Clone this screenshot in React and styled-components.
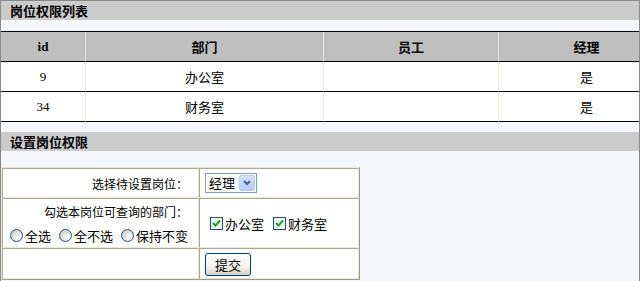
import React from "react";
import styled, { createGlobalStyle } from "styled-components";

const GlobalStyle = createGlobalStyle`
  html, body {
    margin: 0;
    padding: 0;
    background: #f5f7fa;
  }
  body {
    font-family: "Noto Sans CJK SC", "Liberation Sans", sans-serif;
    font-size: 12px;
    color: #000;
  }
`;

const Page = styled.div`
  width: 640px;
  height: 281px;
  box-sizing: border-box;
  border: 1px solid #8a8a8a;
  border-bottom: none;
  background: #f5f7fa;
  overflow: hidden;
`;

const SectionTitle = styled.div`
  height: 19px;
  line-height: 19px;
  padding-left: 9px;
  background: #cccccc;
  font-size: 13px;
  font-weight: bold;
  margin-top: ${(p) => p.$top || 0}px;
`;

const ListTable = styled.table`
  width: 673px;
  margin-top: 11px;
  border-spacing: 0;
  border-collapse: separate;
  table-layout: fixed;
  border-top: 1px solid #000;
`;

const HeadCell = styled.th`
  height: 29px;
  padding: 0;
  background: #bfbfbf;
  border-bottom: 1px solid #000;
  border-left: ${(p) => (p.$first ? "none" : "1px solid #ece9d8")};
  font-size: 13px;
  font-weight: bold;
  text-align: center;
  font-family: ${(p) =>
    p.$latin ? '"Liberation Serif", serif' : '"Noto Sans CJK SC", sans-serif'};
`;

const Cell = styled.td`
  height: 29px;
  padding: 0;
  background: #fff;
  border-bottom: 1px solid #000;
  border-left: ${(p) => (p.$first ? "none" : "1px solid #ece9d8")};
  font-size: 13px;
  text-align: center;
  font-family: ${(p) =>
    p.$latin ? '"Liberation Serif", serif' : '"Noto Sans CJK SC", sans-serif'};
`;

const FormTable = styled.table`
  width: 359px;
  margin-top: 16px;
  border-spacing: 0;
  border-collapse: separate;
  table-layout: fixed;
  border: 1px solid;
  border-color: #ece9d8 #9d9a8c #9d9a8c #ece9d8;
  background: #fff;
`;

const FormCell = styled.td`
  height: ${(p) => p.$h}px;
  border: 1px solid;
  border-color: #aca899 #ece9d8 #ece9d8 #aca899;
  vertical-align: middle;
  font-size: 12px;
`;

const LabelCell = styled(FormCell)`
  padding: 0 10px 0 0;
  text-align: right;
`;

const ValueCell = styled(FormCell)`
  padding: 0 0 0 5px;
  text-align: left;
`;

const Line = styled.div`
  display: flex;
  align-items: center;
  height: 24px;
  justify-content: ${(p) => p.$justify || "flex-end"};
  gap: ${(p) => p.$gap || 0}px;
  padding-left: ${(p) => p.$indent || 0}px;
`;

const Option = styled.label`
  display: inline-flex;
  align-items: center;
  gap: 2px;
  font-size: 13px;
`;

const Radio = styled.span`
  width: 13px;
  height: 13px;
  box-sizing: border-box;
  border-radius: 50%;
  border: 1px solid #1c5180;
  background: radial-gradient(circle at 70% 70%, #ffffff 0%, #dcdcd5 60%, #c6c5ba 100%);
  display: inline-block;
`;

const Check = styled.span`
  width: 13px;
  height: 13px;
  box-sizing: border-box;
  border: 1px solid #1c5180;
  background: #f4f4f0;
  display: inline-flex;
  align-items: center;
  justify-content: center;
`;

const SelectBox = styled.div`
  display: inline-flex;
  align-items: center;
  height: 20px;
  box-sizing: border-box;
  border: 1px solid #7f9db9;
  background: #fff;
  padding: 1px;
`;

const SelectText = styled.span`
  padding: 0 4px 0 2px;
  font-size: 13px;
  line-height: 16px;
`;

const SelectArrow = styled.span`
  width: 16px;
  height: 16px;
  box-sizing: border-box;
  border: 1px solid #b9c9ef;
  border-radius: 2px;
  background: linear-gradient(#d6e2fc, #b6c9f7);
  display: inline-flex;
  align-items: center;
  justify-content: center;
`;

const SubmitButton = styled.button`
  width: 46px;
  height: 23px;
  margin-top: 2px;
  padding: 0;
  border: 1px solid #003c74;
  border-radius: 3px;
  background: linear-gradient(#ffffff, #f4f3ee 60%, #d6d0c5);
  font-family: "Noto Sans CJK SC", sans-serif;
  font-size: 13px;
  color: #000;
`;

const rows = [
  { id: 9, dept: "办公室", staff: "", manager: "是" },
  { id: 34, dept: "财务室", staff: "", manager: "是" },
];

const CheckMark = () => (
  <svg width="9" height="9" viewBox="0 0 9 9">
    <path d="M1 4 L3.5 6.5 L8 1.5" fill="none" stroke="#21a121" strokeWidth="2" />
  </svg>
);

const Chevron = () => (
  <svg width="8" height="6" viewBox="0 0 8 6">
    <path d="M1 1 L4 4 L7 1" fill="none" stroke="#4d6185" strokeWidth="2" />
  </svg>
);

export default function App() {
  return (
    <>
      <GlobalStyle />
      <Page>
        <SectionTitle>岗位权限列表</SectionTitle>
        <ListTable>
          <colgroup>
            <col style={{ width: 84 }} />
            <col style={{ width: 238 }} />
            <col style={{ width: 175 }} />
            <col style={{ width: 176 }} />
          </colgroup>
          <thead>
            <tr>
              <HeadCell $first $latin>id</HeadCell>
              <HeadCell>部门</HeadCell>
              <HeadCell>员工</HeadCell>
              <HeadCell>经理</HeadCell>
            </tr>
          </thead>
          <tbody>
            {rows.map((r) => (
              <tr key={r.id}>
                <Cell $first $latin>{r.id}</Cell>
                <Cell>{r.dept}</Cell>
                <Cell>{r.staff}</Cell>
                <Cell>{r.manager}</Cell>
              </tr>
            ))}
          </tbody>
        </ListTable>

        <SectionTitle $top={10}>设置岗位权限</SectionTitle>
        <FormTable>
          <colgroup>
            <col style={{ width: 197 }} />
            <col />
          </colgroup>
          <tbody>
            <tr>
              <LabelCell $h={28}>选择待设置岗位：</LabelCell>
              <ValueCell $h={28}>
                <SelectBox>
                  <SelectText>经理</SelectText>
                  <SelectArrow>
                    <Chevron />
                  </SelectArrow>
                </SelectBox>
              </ValueCell>
            </tr>
            <tr>
              <LabelCell $h={48}>
                <Line>勾选本岗位可查询的部门：</Line>
                <Line $gap={8}>
                  <Option><Radio />全选</Option>
                  <Option><Radio />全不选</Option>
                  <Option><Radio />保持不变</Option>
                </Line>
              </LabelCell>
              <ValueCell $h={48}>
                <Line $justify="flex-start" $gap={9} $indent={5}>
                  <Option><Check><CheckMark /></Check>办公室</Option>
                  <Option><Check><CheckMark /></Check>财务室</Option>
                </Line>
              </ValueCell>
            </tr>
            <tr>
              <LabelCell $h={29}></LabelCell>
              <ValueCell $h={29}>
                <SubmitButton>提交</SubmitButton>
              </ValueCell>
            </tr>
          </tbody>
        </FormTable>
      </Page>
    </>
  );
}
